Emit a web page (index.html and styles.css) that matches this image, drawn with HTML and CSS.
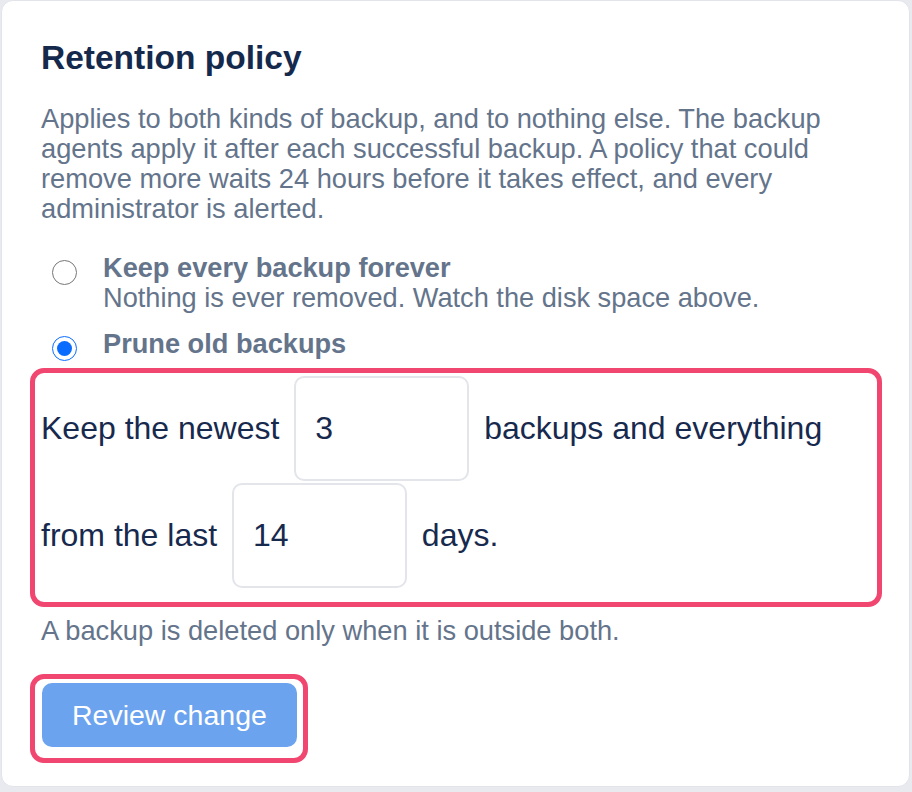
FILE: index.html
```html
<!DOCTYPE html>
<html lang="en">
<head>
  <meta charset="UTF-8">
  <meta name="viewport" content="width=device-width, initial-scale=1.0">
  <title>Retention policy</title>
  <link rel="stylesheet" href="styles.css">
</head>
<body>
  <main class="card">
    <h2 class="card-title">Retention policy</h2>
    <p class="card-lead">Applies to both kinds of backup, and to nothing else. The backup agents apply it after each successful backup. A policy that could remove more waits 24 hours before it takes effect, and every administrator is alerted.</p>

    <div class="choices">
      <label class="choice">
        <input type="radio" name="mode" value="forever">
        <span class="choice-text">
          <strong>Keep every backup forever</strong>
          <span class="choice-hint">Nothing is ever removed. Watch the disk space above.</span>
        </span>
      </label>
      <label class="choice">
        <input type="radio" name="mode" value="prune" checked>
        <span class="choice-text">
          <strong>Prune old backups</strong>
        </span>
      </label>
    </div>

    <!-- Prune rule -->
    <div class="rule">
      Keep the newest <input type="text" class="rule-input" id="keepCount" value="3"> backups and everything from the last <input type="text" class="rule-input" id="keepDays" value="14"> days.
    </div>
    <p class="rule-note">A backup is deleted only when it is outside both.</p>

    <div class="action">
      <button type="button" class="btn">Review change</button>
    </div>
  </main>
</body>
</html>
```

FILE: styles.css
```css
/* retention.css */

* {
  box-sizing: border-box;
}

body {
  margin: 0;
  background: #e9eaef;
  font-family: "Liberation Sans", Arial, sans-serif;
}

/* Card */
.card {
  display: block;
  width: 909px;
  margin-left: 1px;
  background: #fff;
  border: 1px solid #e2e4ea;
  border-radius: 12px;
  padding: 37px 39px 23px 39px;
}

.card-title {
  margin: 0;
  font-size: 33.5px;
  line-height: 40px;
  font-weight: bold;
  color: #15294c;
}

.card-lead {
  margin: 26px 0 0;
  font-size: 27.25px;
  line-height: 30px;
  color: #64748b;
}

/* Radio choices */
.choices {
  margin-top: 29px;
}

.choice {
  display: flex;
  align-items: flex-start;
  font-size: 27.2px;
  line-height: 30px;
  color: #64748b;
}

.choice + .choice {
  margin-top: 16px;
}

.choice input[type="radio"] {
  width: 25px;
  height: 25px;
  margin: 7px 26px 0 11px;
  flex-shrink: 0;
  accent-color: #0a6cff;
}

.choice-text strong {
  display: block;
  font-weight: bold;
}

.choice-hint {
  display: block;
}

/* Rule box */
.rule {
  margin: 7px -12px 0 -11px;
  border: 5px solid #f0466f;
  border-radius: 14px;
  padding: 2px 7px 13px 6px;
  font-size: 32px;
  line-height: 30px;
  color: #172a4e;
}

.rule-input {
  width: 175px;
  height: 105px;
  margin: 1px 6px;
  padding: 0 19px;
  border: 2px solid #e3e5ea;
  border-radius: 10px;
  font-family: inherit;
  font-size: 32px;
  color: #172a4e;
  background: #fff;
}

.rule-input:focus {
  outline: none;
  border-color: #6ca3ef;
}

.rule-note {
  margin: 9px 0 0;
  font-size: 27.25px;
  line-height: 30px;
  color: #64748b;
}

/* Button */
.action {
  display: inline-block;
  margin: 28px 0 0 -11px;
  border: 5px solid #f0466f;
  border-radius: 14px;
  padding: 4px 6px 11px 7px;
}

.btn {
  display: block;
  height: 64px;
  padding: 0 30px;
  border: none;
  border-radius: 10px;
  background: #6ca3ef;
  color: #fff;
  font-family: inherit;
  font-size: 28.5px;
  cursor: pointer;
}
```
